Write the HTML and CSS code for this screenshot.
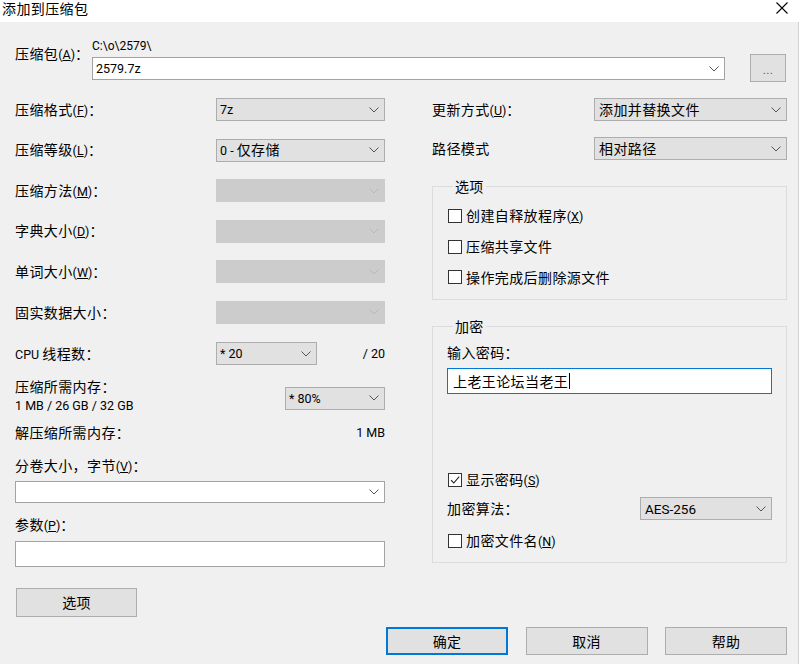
FILE: index.html
```html
<!DOCTYPE html>
<html lang="zh-CN">
<head>
<meta charset="utf-8">
<title>添加到压缩包</title>
<link rel="stylesheet" href="styles.css">
</head>
<body>
<div class="titlebar">
  <div class="title">添加到压缩包</div>
  <svg class="close" viewBox="0 0 12 12" width="12" height="12"><path d="M0.5 0.5 L11.5 11.5 M11.5 0.5 L0.5 11.5" stroke="#000" stroke-width="1.1" fill="none"/></svg>
</div>
<div class="dialog">
  <div class="archive">
    <div class="t archive-lbl">压缩包<span class="e">(<u>A</u>)</span>：</div>
    <div class="archive-main">
      <div class="path e">C:\o\2579\</div>
      <div class="combo"><span class="e">2579.7z</span><svg class="chev" viewBox="0 0 10 6" width="10" height="6"><path d="M0.5 0.5 L5 5 L9.5 0.5" fill="none" stroke="#555" stroke-width="1"/></svg></div>
    </div>
    <div class="btn browse"><span class="dots">...</span></div>
  </div>

  <div class="cols">
    <div class="left">
      <div class="row">
        <div class="t">压缩格式<span class="e">(<u>F</u>)</span>：</div>
        <div class="sel w169"><span class="e">7z</span><svg class="chev" viewBox="0 0 10 6" width="10" height="6"><path d="M0.5 0.5 L5 5 L9.5 0.5" fill="none" stroke="#555" stroke-width="1"/></svg></div>
      </div>
      <div class="row mt-a">
        <div class="t">压缩等级<span class="e">(<u>L</u>)</span>：</div>
        <div class="sel w169"><span class="t"><span class="e">0 - </span>仅存储</span><svg class="chev" viewBox="0 0 10 6" width="10" height="6"><path d="M0.5 0.5 L5 5 L9.5 0.5" fill="none" stroke="#555" stroke-width="1"/></svg></div>
      </div>
      <div class="row mt-a">
        <div class="t">压缩方法<span class="e">(<u>M</u>)</span>：</div>
        <div class="sel w169 dis"><svg class="chev" viewBox="0 0 10 6" width="10" height="6"><path d="M0.5 0.5 L5 5 L9.5 0.5" fill="none" stroke="#b8b8b8" stroke-width="1"/></svg></div>
      </div>
      <div class="row mt-a">
        <div class="t">字典大小<span class="e">(<u>D</u>)</span>：</div>
        <div class="sel w169 dis"><svg class="chev" viewBox="0 0 10 6" width="10" height="6"><path d="M0.5 0.5 L5 5 L9.5 0.5" fill="none" stroke="#b8b8b8" stroke-width="1"/></svg></div>
      </div>
      <div class="row mt-a">
        <div class="t">单词大小<span class="e">(<u>W</u>)</span>：</div>
        <div class="sel w169 dis"><svg class="chev" viewBox="0 0 10 6" width="10" height="6"><path d="M0.5 0.5 L5 5 L9.5 0.5" fill="none" stroke="#b8b8b8" stroke-width="1"/></svg></div>
      </div>
      <div class="row mt-a">
        <div class="t">固实数据大小：</div>
        <div class="sel w169 dis"><svg class="chev" viewBox="0 0 10 6" width="10" height="6"><path d="M0.5 0.5 L5 5 L9.5 0.5" fill="none" stroke="#b8b8b8" stroke-width="1"/></svg></div>
      </div>
      <div class="row h22 mt-cpu">
        <div class="t"><span class="e">CPU </span>线程数：</div>
        <div class="cpu-right">
          <div class="sel w101 h22"><span class="e">* 20</span><svg class="chev" viewBox="0 0 10 6" width="10" height="6"><path d="M0.5 0.5 L5 5 L9.5 0.5" fill="none" stroke="#555" stroke-width="1"/></svg></div>
          <span class="e">/ 20</span>
        </div>
      </div>
      <div class="mem">
        <div class="mem-text">
          <div class="t line">压缩所需内存：</div>
          <div class="e line">1 MB / 26 GB / 32 GB</div>
        </div>
        <div class="sel w100 mem-sel"><span class="e">* 80%</span><svg class="chev" viewBox="0 0 10 6" width="10" height="6"><path d="M0.5 0.5 L5 5 L9.5 0.5" fill="none" stroke="#555" stroke-width="1"/></svg></div>
      </div>
      <div class="line split decomp">
        <span class="t">解压缩所需内存：</span>
        <span class="e">1 MB</span>
      </div>
      <div class="t line vol">分卷大小，字节<span class="e">(<u>V</u>)</span>：</div>
      <div class="combo h22 vol-combo"><svg class="chev" viewBox="0 0 10 6" width="10" height="6"><path d="M0.5 0.5 L5 5 L9.5 0.5" fill="none" stroke="#555" stroke-width="1"/></svg></div>
      <div class="t line param">参数<span class="e">(<u>P</u>)</span>：</div>
      <div class="input param-input"></div>
      <div class="btn opt-btn">选项</div>
    </div>

    <div class="right">
      <div class="row">
        <div class="t">更新方式<span class="e">(<u>U</u>)</span>：</div>
        <div class="sel w193"><span class="t">添加并替换文件</span><svg class="chev" viewBox="0 0 10 6" width="10" height="6"><path d="M0.5 0.5 L5 5 L9.5 0.5" fill="none" stroke="#555" stroke-width="1"/></svg></div>
      </div>
      <div class="row h22 mt-path">
        <div class="t">路径模式</div>
        <div class="sel w193 h22"><span class="t">相对路径</span><svg class="chev" viewBox="0 0 10 6" width="10" height="6"><path d="M0.5 0.5 L5 5 L9.5 0.5" fill="none" stroke="#555" stroke-width="1"/></svg></div>
      </div>

      <fieldset class="group g1">
        <legend>选项</legend>
        <div class="check-row"><span class="box"></span><span class="t">创建自释放程序<span class="e">(<u>X</u>)</span></span></div>
        <div class="check-row mt-c"><span class="box"></span><span class="t">压缩共享文件</span></div>
        <div class="check-row mt-c"><span class="box"></span><span class="t">操作完成后删除源文件</span></div>
      </fieldset>

      <fieldset class="group g2">
        <legend>加密</legend>
        <div class="t line">输入密码：</div>
        <div class="input pwd"><span class="pwd-text">上老王论坛当老王</span><span class="caret"></span></div>
        <div class="check-row show-pwd"><span class="box"><svg viewBox="0 0 12 12" width="12" height="12"><path d="M2 6.2 L4.8 9 L10.2 2.6" fill="none" stroke="#222" stroke-width="1.1"/></svg></span><span class="t">显示密码<span class="e">(<u>S</u>)</span></span></div>
        <div class="row alg">
          <div class="t">加密算法：</div>
          <div class="sel w132"><span class="e aes">AES-256</span><svg class="chev" viewBox="0 0 10 6" width="10" height="6"><path d="M0.5 0.5 L5 5 L9.5 0.5" fill="none" stroke="#555" stroke-width="1"/></svg></div>
        </div>
        <div class="check-row enc-name"><span class="box"></span><span class="t">加密文件名<span class="e">(<u>N</u>)</span></span></div>
      </fieldset>
    </div>
  </div>

  <div class="buttons">
    <div class="btn big default">确定</div>
    <div class="btn big">取消</div>
    <div class="btn big">帮助</div>
  </div>
</div>
</body>
</html>
```
FILE: styles.css
```css
* { box-sizing: border-box; }
html, body { margin: 0; padding: 0; }
body {
  width: 800px;
  height: 665px;
  overflow: hidden;
  background: #ffffff;
  font-family: "Noto Sans CJK SC", "Noto Sans", sans-serif;
  color: #000;
}
u { text-decoration: underline; text-underline-offset: 1px; text-decoration-thickness: 1px; }

.titlebar {
  height: 22px;
  background: #fff;
  display: flex;
  justify-content: space-between;
  align-items: flex-start;
  padding: 0 12px 0 2px;
}
.title { font-size: 14px; letter-spacing: 0.4px; line-height: 17px; }
.close { margin-top: 2px; }

.dialog {
  width: 799px;
  height: 642px;
  background: #f0f0f0;
  border-right: 1px solid #d2d2d2;
  padding: 16px 11px 0 15px;
  display: flex;
  flex-direction: column;
}

.t { font-size: 14px; letter-spacing: 0.4px; line-height: 19px; white-space: nowrap; }
.e { font-family: Roboto, "Liberation Sans", sans-serif; font-size: 12.5px; letter-spacing: 0; white-space: pre; }
.line { line-height: 19px; height: 19px; }

/* archive row */
.archive { display: flex; align-items: flex-start; height: 44px; }
.archive-lbl { width: 77px; margin-top: 6px; }
.archive-main { width: 633px; display: flex; flex-direction: column; }
.path { line-height: 16px; height: 16px; margin-bottom: 3px; font-size: 12px; }

.combo {
  height: 23px;
  background: #fff;
  border: 1px solid #a3a3a3;
  display: flex;
  align-items: center;
  padding: 0 5px 0 3px;
}
.combo .chev { margin-left: auto; }
.h22 { height: 22px; }

.btn {
  background: #e1e1e1;
  border: 1px solid #adadad;
  display: flex;
  align-items: center;
  justify-content: center;
  font-size: 14px;
  letter-spacing: 0.3px;
  line-height: 18px;
}
.browse { width: 36px; height: 28px; margin-left: 25px; margin-top: 16px; }
.dots { font-family: "Liberation Sans", sans-serif; font-size: 11px; color: #555; letter-spacing: 0.5px; margin-top: 3px; }

/* columns */
.cols { display: flex; margin-top: 16px; }
.left { width: 370px; display: flex; flex-direction: column; }
.right { width: 355px; margin-left: 47px; display: flex; flex-direction: column; }

.row { display: flex; align-items: center; justify-content: space-between; height: 23px; }
.mt-a { margin-top: 17.5px; }
.mt-cpu { margin-top: 18.5px; }
.mt-path { margin-top: 16px; }

.sel {
  height: 23px;
  background: #e1e1e1;
  border: 1px solid #adadad;
  display: flex;
  align-items: center;
  padding: 0 5px 0 3px;
}
.sel .chev { margin-left: auto; flex: none; }
.sel.dis { background: #cccccc; border-color: #cccccc; }
.w169 { width: 169px; }
.w101 { width: 101px; }
.w100 { width: 100px; }
.w193 { width: 193px; padding-left: 4px; }
.w132 { width: 132px; padding-left: 4px; }

.cpu-right { display: flex; align-items: center; justify-content: space-between; width: 169px; }

.mem { display: flex; justify-content: space-between; align-items: flex-start; margin-top: 11.5px; }
.mem-sel { margin-top: 10px; }

.split { display: flex; justify-content: space-between; align-items: center; }
.decomp { margin-top: 8px; }
.vol { margin-top: 14.5px; }
.vol-combo { margin-top: 5.5px; }
.param { margin-top: 12.5px; }

.input { background: #fff; border: 1px solid #a3a3a3; height: 26px; }
.param-input { margin-top: 6.5px; }

.opt-btn { width: 121px; height: 29px; margin-top: 21px; margin-left: 1px; }

/* group boxes */
.group {
  margin: 18px 0 0 0;
  padding: 0 14px;
  border: 1px solid #dcdcdc;
  min-width: 0;
  width: 355px;
}
.group legend {
  font-size: 14px;
  letter-spacing: 0.3px;
  line-height: 16px;
  padding: 0 2px;
  margin-left: 6px;
}
.g1 { padding-top: 12px; padding-bottom: 12px; }
.g2 { padding-top: 9px; padding-bottom: 11px; }

.check-row { display: flex; align-items: center; height: 20px; }
.mt-c { margin-top: 10.5px; }
.box {
  width: 14px;
  height: 14px;
  background: #fff;
  border: 1px solid #333;
  margin-left: 1px;
  margin-right: 4px;
  display: flex;
  align-items: center;
  justify-content: center;
  flex: none;
}

.pwd {
  margin-top: 6px;
  border-color: #0078d7;
  display: flex;
  align-items: center;
  padding-left: 5px;
}
.pwd-text { font-size: 14px; letter-spacing: 0.4px; line-height: 18px; }
.caret { width: 1px; height: 16px; background: #000; margin-left: 1px; }
.show-pwd { margin-top: 76px; }
.alg { margin-top: 7px; }
.aes { font-size: 13.5px; }
.enc-name { margin-top: 11px; }

/* bottom buttons */
.buttons { display: flex; justify-content: flex-end; gap: 17.5px; margin-top: 10px; }
.btn.big { width: 122px; height: 28px; }
.btn.default { border: 2px solid #0078d7; }
```
